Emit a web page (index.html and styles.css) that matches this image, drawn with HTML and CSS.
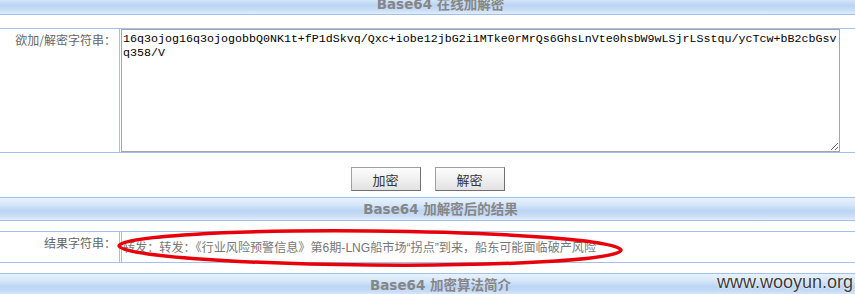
FILE: index.html
```html
<!DOCTYPE html>
<html lang="zh-CN">
<head>
<meta charset="utf-8">
<title>Base64 在线加解密</title>
<link rel="stylesheet" href="styles.css">
</head>
<body>
<div class="page">
  <div class="bar bar-top"><span class="bar-title">Base64 在线加解密</span></div>
  <div class="row row-input">
    <div class="label">欲加/解密字符串：</div>
    <div class="field">
      <textarea class="code" spellcheck="false">16q3ojog16q3ojogobbQ0NK1t+fP1dSkvq/Qxc+iobe12jbG2i1MTke0rMrQs6GhsLnVte0hsbW9wLSjrLSstqu/ycTcw+bB2cbGsvq358/V</textarea>
    </div>
  </div>
  <div class="actions">
    <button class="btn" type="button">加密</button>
    <button class="btn" type="button">解密</button>
  </div>
  <div class="bar bar-mid"><span class="bar-title">Base64 加解密后的结果</span></div>
  <div class="row row-result">
    <div class="label">结果字符串：</div>
    <div class="field result">转发：转发：《行业风险预警信息》第6期-LNG船市场“拐点”到来，船东可能面临破产风险</div>
  </div>
  <div class="bar bar-bottom"><span class="bar-title">Base64 加密算法简介</span></div>
  <div class="watermark">www.wooyun.org</div>
  <svg class="mark" width="855" height="294" viewBox="0 0 855 294" aria-hidden="true">
    <ellipse cx="370" cy="248" rx="251" ry="17" transform="rotate(0.5 370 248)" fill="none" stroke="#e8000b" stroke-width="3.5"/>
  </svg>
</div>
</body>
</html>
```
FILE: styles.css
```css
html, body {
  margin: 0;
  padding: 0;
  background: #ffffff;
}

.page {
  position: relative;
  width: 855px;
  height: 294px;
  overflow: hidden;
  font-family: "Noto Sans CJK SC", sans-serif;
}

.bar {
  box-sizing: content-box;
  height: 22px;
  line-height: 22px;
  border-top: 1px solid #a4bfe8;
  border-bottom: 1px solid #a4bfe8;
  background: linear-gradient(to bottom, #e8f2fd 0%, #d6e7fa 30%, #bad5f4 58%, #c6dcf6 78%, #e0edfb 100%);
  text-align: center;
  padding-left: 26px;
  font-family: "DejaVu Sans", "Noto Sans CJK SC", sans-serif;
  font-weight: bold;
  font-size: 13.5px;
  color: #868686;
  white-space: nowrap;
}

.bar-top {
  margin-top: -8px;
  height: 21px;
}

.bar-mid {
  margin-top: 0;
}

.bar-bottom {
  margin-top: 10px;
}

.row {
  display: flex;
  border-top: 1px solid #a4bfe8;
  border-bottom: 1px solid #a4bfe8;
}

.row-input {
  margin-top: 13px;
  height: 123px;
}

.row-result {
  margin-top: 10px;
  height: 30px;
}

.label {
  box-sizing: content-box;
  width: 116px;
  padding-right: 3px;
  padding-top: 3px;
  border-right: 1px solid #a4bfe8;
  text-align: right;
  font-size: 12px;
  line-height: 16px;
  color: #666666;
  white-space: nowrap;
}

.field {
  margin-left: 1px;
  flex: 1;
}

.code {
  display: block;
  box-sizing: border-box;
  width: 719px;
  height: 123px;
  margin: 0;
  padding: 2px 1px;
  border: 1px solid #a5a5a5;
  font-family: "Liberation Mono", monospace;
  font-size: 11.66px;
  line-height: 14px;
  color: #000000;
  background: #ffffff;
  word-break: break-all;
  outline: none;
}

.result {
  border-left: 1px solid #a4bfe8;
  padding-left: 1px;
  padding-top: 8px;
  font-family: "Liberation Sans", "Noto Sans CJK SC", sans-serif;
  font-size: 12.1px;
  line-height: 16px;
  color: #777777;
  white-space: nowrap;
}

.actions {
  box-sizing: border-box;
  height: 44px;
  padding-top: 14px;
  display: flex;
  justify-content: center;
  gap: 14px;
}

.btn {
  box-sizing: border-box;
  width: 70px;
  height: 24px;
  margin: 0;
  padding: 2px 0 0;
  border: 1px solid;
  border-color: #a0a0a0 #707070 #707070 #a0a0a0;
  background: linear-gradient(to bottom, #fdfdfd 0%, #f0f0f0 50%, #e2e2e2 100%);
  font-family: "Noto Sans CJK SC", sans-serif;
  font-size: 13px;
  line-height: 18px;
  color: #333333;
}

.watermark {
  position: absolute;
  top: 273px;
  right: 2px;
  font-family: "Liberation Sans", Arial, sans-serif;
  font-size: 18px;
  line-height: 18px;
  color: #3a3a3a;
  text-shadow: 0 0 2px #ffffff, 0 0 1px #ffffff;
}

.mark {
  position: absolute;
  left: 0;
  top: 0;
  pointer-events: none;
}
```
